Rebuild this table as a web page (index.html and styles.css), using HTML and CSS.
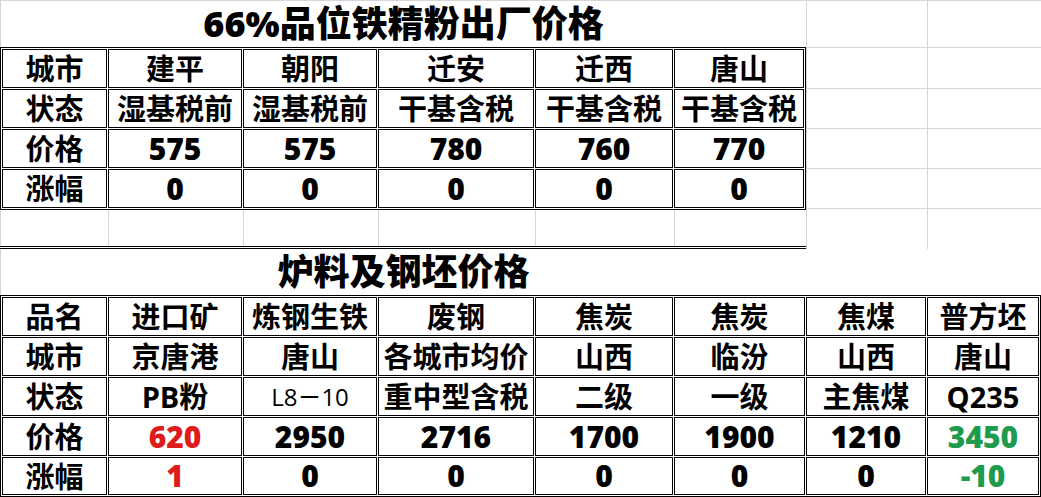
FILE: index.html
```html
<!DOCTYPE html>
<html lang="zh-CN">
<head>
<meta charset="utf-8">
<title>价格表</title>
<link rel="stylesheet" href="styles.css">
</head>
<body>
<div class="sheet">
  <div class="upper">
    <div class="left">
      <div class="title title1">66%品位铁精粉出厂价格</div>
      <div class="tbl tbl1">
        <div class="c">城市</div><div class="c">建平</div><div class="c">朝阳</div><div class="c">迁安</div><div class="c">迁西</div><div class="c">唐山</div>
        <div class="c">状态</div><div class="c">湿基税前</div><div class="c">湿基税前</div><div class="c">干基含税</div><div class="c">干基含税</div><div class="c">干基含税</div>
        <div class="c">价格</div><div class="c num">575</div><div class="c num">575</div><div class="c num">780</div><div class="c num">760</div><div class="c num">770</div>
        <div class="c">涨幅</div><div class="c num">0</div><div class="c num">0</div><div class="c num">0</div><div class="c num">0</div><div class="c num">0</div>
      </div>
      <div class="blank-row">
        <div></div><div></div><div></div><div></div><div></div><div></div>
      </div>
    </div>
    <div class="side">
      <div></div><div></div>
      <div></div><div></div>
      <div></div><div></div>
      <div></div><div></div>
      <div></div><div></div>
      <div class="last"></div><div class="last"></div>
    </div>
  </div>
  <div class="title title2">炉料及钢坯价格</div>
  <div class="tbl tbl2">
    <div class="c">品名</div><div class="c">进口矿</div><div class="c">炼钢生铁</div><div class="c">废钢</div><div class="c">焦炭</div><div class="c">焦炭</div><div class="c">焦煤</div><div class="c">普方坯</div>
    <div class="c">城市</div><div class="c">京唐港</div><div class="c">唐山</div><div class="c">各城市均价</div><div class="c">山西</div><div class="c">临汾</div><div class="c">山西</div><div class="c">唐山</div>
    <div class="c">状态</div><div class="c">PB粉</div><div class="c thin">L8－10</div><div class="c">重中型含税</div><div class="c">二级</div><div class="c">一级</div><div class="c">主焦煤</div><div class="c">Q235</div>
    <div class="c">价格</div><div class="c num red">620</div><div class="c num">2950</div><div class="c num">2716</div><div class="c num">1700</div><div class="c num">1900</div><div class="c num">1210</div><div class="c num green">3450</div>
    <div class="c">涨幅</div><div class="c num red">1</div><div class="c num">0</div><div class="c num">0</div><div class="c num">0</div><div class="c num">0</div><div class="c num">0</div><div class="c num green">-10</div>
  </div>
</div>
</body>
</html>
```

FILE: styles.css
```css
* {
  box-sizing: border-box;
  margin: 0;
  padding: 0;
}

html,
body {
  width: 1041px;
  height: 497px;
  overflow: hidden;
  background: #ffffff;
}

body {
  font-family: "Open Sans", "Noto Sans CJK SC", sans-serif;
  color: #000000;
}

.sheet {
  width: 1041px;
  height: 497px;
  display: flex;
  flex-direction: column;
}

.upper {
  display: flex;
  height: 249px;
}

.left {
  width: 806px;
  display: flex;
  flex-direction: column;
}

.title {
  display: flex;
  align-items: center;
  justify-content: center;
  font-family: "Open Sans", "Noto Sans CJK SC", sans-serif;
  font-weight: 800;
  font-size: 36px;
  line-height: 1;
  border-left: 1px solid #d6d6d6;
  white-space: nowrap;
}

.title1 {
  height: 47px;
  border-top: 1px solid #d6d6d6;
}

.title2 {
  width: 806px;
  height: 46px;
}

.tbl {
  display: grid;
  border: 1px solid #000000;
  padding: 1px;
  gap: 1px;
}

.tbl1 {
  width: 806px;
  height: 163px;
  grid-template-columns: 105px 134px 134px 156px 138px 130px;
  grid-template-rows: repeat(4, 39px);
}

.tbl2 {
  width: 1041px;
  height: 202px;
  grid-template-columns: 105px 134px 134px 156px 138px 131px 120px 112px;
  grid-template-rows: 39px 39px 39px 39px 38px;
}

.c {
  border: 1px solid #000000;
  display: flex;
  align-items: center;
  justify-content: center;
  font-weight: 700;
  font-size: 29px;
  line-height: 1;
  white-space: nowrap;
}

.num {
  font-size: 30px;
  font-weight: 800;
}

.thin {
  font-weight: 500;
  font-size: 24px;
}

.red {
  color: #e01b1b;
}

.green {
  color: #1f9b4e;
}

.blank-row {
  height: 39px;
  display: grid;
  grid-template-columns: 108px 135px 135px 157px 139px 132px;
  border-bottom: 3px double #000000;
}

.blank-row div {
  border-left: 1px solid #d6d6d6;
}

.side {
  width: 235px;
  display: grid;
  grid-template-columns: 121px 114px;
  grid-template-rows: 47px 41px 40px 40px 40px 41px;
}

.side div {
  border-top: 1px solid #d6d6d6;
  border-left: 1px solid #d6d6d6;
}
```
